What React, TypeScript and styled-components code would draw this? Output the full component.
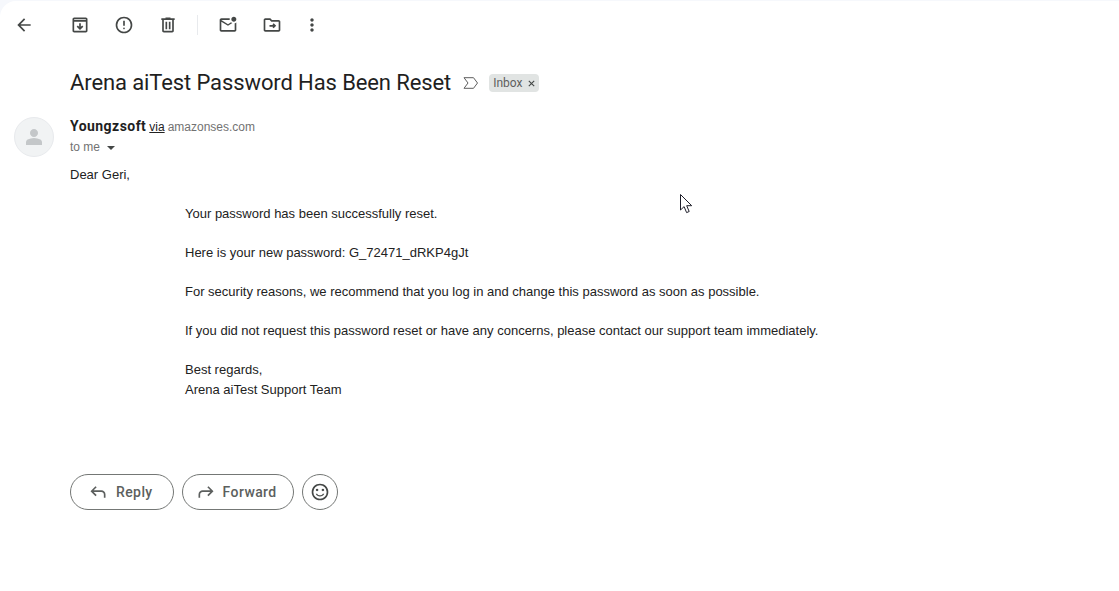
import styled, { createGlobalStyle } from "styled-components";

const GlobalStyle = createGlobalStyle`
  html, body {
    margin: 0;
    height: 100%;
    background: #f6f8fc;
    overflow: hidden;
  }
`;

const Page = styled.div`
  position: relative;
  width: 1119px;
  height: 591px;
  box-sizing: border-box;
  padding-top: 1px;
  background: #f6f8fc;
`;

const Sheet = styled.main`
  height: 590px;
  background: #fff;
  border-top-left-radius: 16px;
  font-family: "Liberation Sans", Arial, sans-serif;
  color: #222;
`;

const Toolbar = styled.div`
  display: flex;
  align-items: center;
  height: 48px;
  padding-left: 4px;
`;

const ToolButton = styled.button<{ $after?: number }>`
  display: flex;
  align-items: center;
  justify-content: center;
  width: 40px;
  height: 40px;
  padding: 0;
  margin-right: ${(p) => p.$after ?? 4}px;
  border: 0;
  background: none;
  color: #444746;
`;

const ToolDivider = styled.div`
  width: 1px;
  height: 20px;
  margin: 0 10px 0 9px;
  background: #e8eaed;
`;

const SubjectRow = styled.div`
  display: flex;
  align-items: center;
  height: 32px;
  margin: 18px 0 0 70px;
`;

const Subject = styled.h1`
  margin: 0 0 2px;
  font-family: Roboto, sans-serif;
  font-size: 22px;
  font-weight: 400;
  letter-spacing: -0.11px;
  color: #1f1f1f;
`;

const ImportanceIcon = styled.svg`
  margin: 0 10px 0 12px;
`;

const Label = styled.span`
  display: flex;
  align-items: center;
  gap: 6px;
  height: 18px;
  padding: 0 4px;
  border-radius: 4px;
  background: #e1e4e3;
  font-family: Roboto, sans-serif;
  font-size: 12px;
  color: #5e5e5e;
`;

const SenderRow = styled.div`
  display: flex;
  margin: 18px 0 0 14px;
`;

const Avatar = styled.div`
  display: flex;
  align-items: center;
  justify-content: center;
  width: 40px;
  height: 40px;
  margin-right: 16px;
  border-radius: 50%;
  background: #f1f3f4;
  box-sizing: border-box;
  border: 1px solid #e8eaed;
  color: #c4c7c9;
`;

const SenderInfo = styled.div`
  display: flex;
  flex-direction: column;
  gap: 3px;
  padding-top: 1px;
`;

const SenderLine = styled.div`
  display: flex;
  align-items: baseline;
  height: 16px;
  font-size: 12px;
  color: #727272;
`;

const SenderName = styled.strong`
  margin-right: 3px;
  font-family: Roboto, sans-serif;
  font-size: 14px;
  font-weight: 700;
  letter-spacing: 0.45px;
  color: #1f1f1f;
`;

const Via = styled.span`
  margin-right: 3px;
  color: #222;
  text-decoration: underline;
`;

const ToLine = styled.div`
  display: flex;
  align-items: center;
  gap: 7px;
  height: 20px;
  font-size: 12px;
  color: #727272;
`;

const Caret = styled.span`
  width: 0;
  height: 0;
  margin-top: 1px;
  border-left: 4px solid transparent;
  border-right: 4px solid transparent;
  border-top: 4px solid #444746;
`;

const Body = styled.div`
  margin: 8px 0 0 70px;
  font-size: 13px;
  line-height: 19.5px;
  color: #222;
`;

const Indented = styled.div`
  margin: 19.5px 0 0 115px;
`;

const Actions = styled.div`
  display: flex;
  gap: 8px;
  margin: 75px 0 0 70px;
`;

const PillButton = styled.button<{ $left: number; $right: number; $gap: number }>`
  display: flex;
  align-items: center;
  gap: ${(p) => p.$gap}px;
  height: 36px;
  box-sizing: border-box;
  padding: 0 ${(p) => p.$right}px 0 ${(p) => p.$left}px;
  border: 1px solid #747775;
  border-radius: 18px;
  background: #fff;
  font-family: Roboto, sans-serif;
  font-size: 14px;
  font-weight: 500;
  letter-spacing: 0.4px;
  color: #5c5f5e;
`;

const RoundButton = styled.button`
  display: flex;
  align-items: center;
  justify-content: center;
  width: 36px;
  height: 36px;
  box-sizing: border-box;
  padding: 0;
  border: 1px solid #747775;
  border-radius: 50%;
  background: #fff;
  color: #444746;
`;

const Cursor = styled.svg`
  position: absolute;
  left: 680px;
  top: 194px;
`;

type IconProps = { d: string; size?: number };

const Icon = ({ d, size = 20 }: IconProps) => (
  <svg width={size} height={size} viewBox="0 -960 960 960" fill="currentColor">
    <path d={d} />
  </svg>
);

const icons = {
  back: "M313-440l224 224-57 56-320-320 320-320 57 56-224 224h487v80H313Z",
  archive:
    "M480-240l160-160-56-56-64 64v-168h-80v168l-64-64-56 56 160 160ZM200-120q-33 0-56.5-23.5T120-200v-560q0-33 23.5-56.5T200-840h560q33 0 56.5 23.5T840-760v560q0 33-23.5 56.5T760-120H200Zm0-520v440h560v-440H200Zm0-80h560v-40H200v40Z",
  report:
    "M480-280q17 0 28.5-11.5T520-320q0-17-11.5-28.5T480-360q-17 0-28.5 11.5T440-320q0 17 11.5 28.5T480-280Zm-40-160h80v-240h-80v240Zm40 360q-83 0-156-31.5T197-197q-54-54-85.5-127T80-480q0-83 31.5-156T197-763q54-54 127-85.5T480-880q83 0 156 31.5T763-763q54 54 85.5 127T880-480q0 83-31.5 156T763-197q-54 54-127 85.5T480-80Zm0-80q134 0 227-93t93-227q0-134-93-227t-227-93q-134 0-227 93t-93 227q0 134 93 227t227 93Z",
  trash:
    "M280-120q-33 0-56.5-23.5T200-200v-520h-40v-80h200v-40h240v40h200v80h-40v520q0 33-23.5 56.5T680-120H280Zm400-600H280v520h400v-520ZM360-280h80v-360h-80v360Zm160 0h80v-360h-80v360Z",
  unread:
    "M160-160q-33 0-56.5-23.5T80-240v-480q0-33 23.5-56.5T160-800h404q-4 20-4 40t4 40H160l320 200 146-91q14 13 30.5 22.5T691-572L480-440 160-640v400h640v-324q23-5 43-14t37-22v360q0 33-23.5 56.5T800-160H160Zm600-480q-50 0-85-35t-35-85q0-50 35-85t85-35q50 0 85 35t35 85q0 50-35 85t-85 35Z",
  move:
    "M160-160q-33 0-56.5-23.5T80-240v-480q0-33 23.5-56.5T160-800h240l80 80h320q33 0 56.5 23.5T880-640v400q0 33-23.5 56.5T800-160H160Zm0-80h640v-400H447l-80-80H160v480Zm400-80 120-120-120-120-56 56 24 24H360v80h168l-24 24 56 56Z",
  more:
    "M480-160q-33 0-56.5-23.5T400-240q0-33 23.5-56.5T480-320q33 0 56.5 23.5T560-240q0 33-23.5 56.5T480-160Zm0-240q-33 0-56.5-23.5T400-480q0-33 23.5-56.5T480-560q33 0 56.5 23.5T560-480q0 33-23.5 56.5T480-400Zm0-240q-33 0-56.5-23.5T400-720q0-33 23.5-56.5T480-800q33 0 56.5 23.5T560-720q0 33-23.5 56.5T480-640Z",
  reply:
    "M760-200v-160q0-50-35-85t-85-35H273l144 144-57 56-240-240 240-240 57 56-144 144h367q83 0 141.5 58.5T840-360v160h-80Z",
  forward:
    "M120-200v-160q0-83 58.5-141.5T320-560h367L543-704l57-56 240 240-240 240-57-56 144-144H320q-50 0-85 35t-35 85v160h-80Z",
  smile:
    "M620-520q25 0 42.5-17.5T680-580q0-25-17.5-42.5T620-640q-25 0-42.5 17.5T560-580q0 25 17.5 42.5T620-520Zm-280 0q25 0 42.5-17.5T400-580q0-25-17.5-42.5T340-640q-25 0-42.5 17.5T280-580q0 25 17.5 42.5T340-520Zm140 260q68 0 123.5-38.5T684-400h-66q-22 37-58.5 58.5T480-320q-43 0-79.5-21.5T342-400h-66q25 63 80.5 101.5T480-260Zm0 180q-83 0-156-31.5T197-197q-54-54-85.5-127T80-480q0-83 31.5-156T197-763q54-54 127-85.5T480-880q83 0 156 31.5T763-763q54 54 85.5 127T880-480q0 83-31.5 156T763-197q-54 54-127 85.5T480-80Zm0-80q134 0 227-93t93-227q0-134-93-227t-227-93q-134 0-227 93t-93 227q0 134 93 227t227 93Z",
  person:
    "M480-480q-66 0-113-47t-47-113q0-66 47-113t113-47q66 0 113 47t47 113q0 66-47 113t-113 47ZM160-160v-112q0-34 17.5-62.5T224-378q62-31 126-46.5T480-440q66 0 130 15.5T736-378q29 15 46.5 43.5T800-272v112H160Z",
};

export default function App() {
  return (
    <Page>
      <GlobalStyle />
      <Sheet>
        <Toolbar>
          <ToolButton $after={16}>
            <Icon d={icons.back} />
          </ToolButton>
          <ToolButton>
            <Icon d={icons.archive} />
          </ToolButton>
          <ToolButton>
            <Icon d={icons.report} />
          </ToolButton>
          <ToolButton $after={0}>
            <Icon d={icons.trash} />
          </ToolButton>
          <ToolDivider />
          <ToolButton>
            <Icon d={icons.unread} />
          </ToolButton>
          <ToolButton $after={0}>
            <Icon d={icons.move} />
          </ToolButton>
          <ToolButton $after={0}>
            <Icon d={icons.more} />
          </ToolButton>
        </Toolbar>

        <SubjectRow>
          <Subject>Arena aiTest Password Has Been Reset</Subject>
          <ImportanceIcon width="16" height="12" viewBox="0 0 16 12" fill="none" stroke="#5e5e5e">
            <path d="M1 .7h9.5l4 5.3-4 5.3H1L5 6Z" />
          </ImportanceIcon>
          <Label>
            Inbox
            <svg width="7" height="7" viewBox="0 0 7 7" stroke="#444746" strokeWidth="1.1">
              <path d="M.8.8l5.4 5.4M6.2.8.8 6.2" />
            </svg>
          </Label>
        </SubjectRow>

        <SenderRow>
          <Avatar>
            <Icon d={icons.person} size={24} />
          </Avatar>
          <SenderInfo>
            <SenderLine>
              <SenderName>Youngzsoft</SenderName>
              <Via>via</Via>
              amazonses.com
            </SenderLine>
            <ToLine>
              to me
              <Caret />
            </ToLine>
          </SenderInfo>
        </SenderRow>

        <Body>
          Dear Geri,
          <Indented>
            Your password has been successfully reset.
            <br />
            <br />
            Here is your new password: G_72471_dRKP4gJt
            <br />
            <br />
            For security reasons, we recommend that you log in and change this password as soon as possible.
            <br />
            <br />
            If you did not request this password reset or have any concerns, please contact our support team immediately.
            <br />
            <br />
            Best regards,
            <br />
            Arena aiTest Support Team
          </Indented>
        </Body>

        <Actions>
          <PillButton $left={17} $right={20} $gap={8}>
            <Icon d={icons.reply} />
            Reply
          </PillButton>
          <PillButton $left={13} $right={16} $gap={7}>
            <Icon d={icons.forward} />
            Forward
          </PillButton>
          <RoundButton>
            <Icon d={icons.smile} />
          </RoundButton>
        </Actions>
      </Sheet>
      <Cursor width="13" height="20" viewBox="0 0 13 20" fill="#fff" stroke="#1f1f2a">
        <path d="M.5.5v15.5l3.6-3.4 2.5 6 2.6-1.1-2.5-5.8h5Z" />
      </Cursor>
    </Page>
  );
}
